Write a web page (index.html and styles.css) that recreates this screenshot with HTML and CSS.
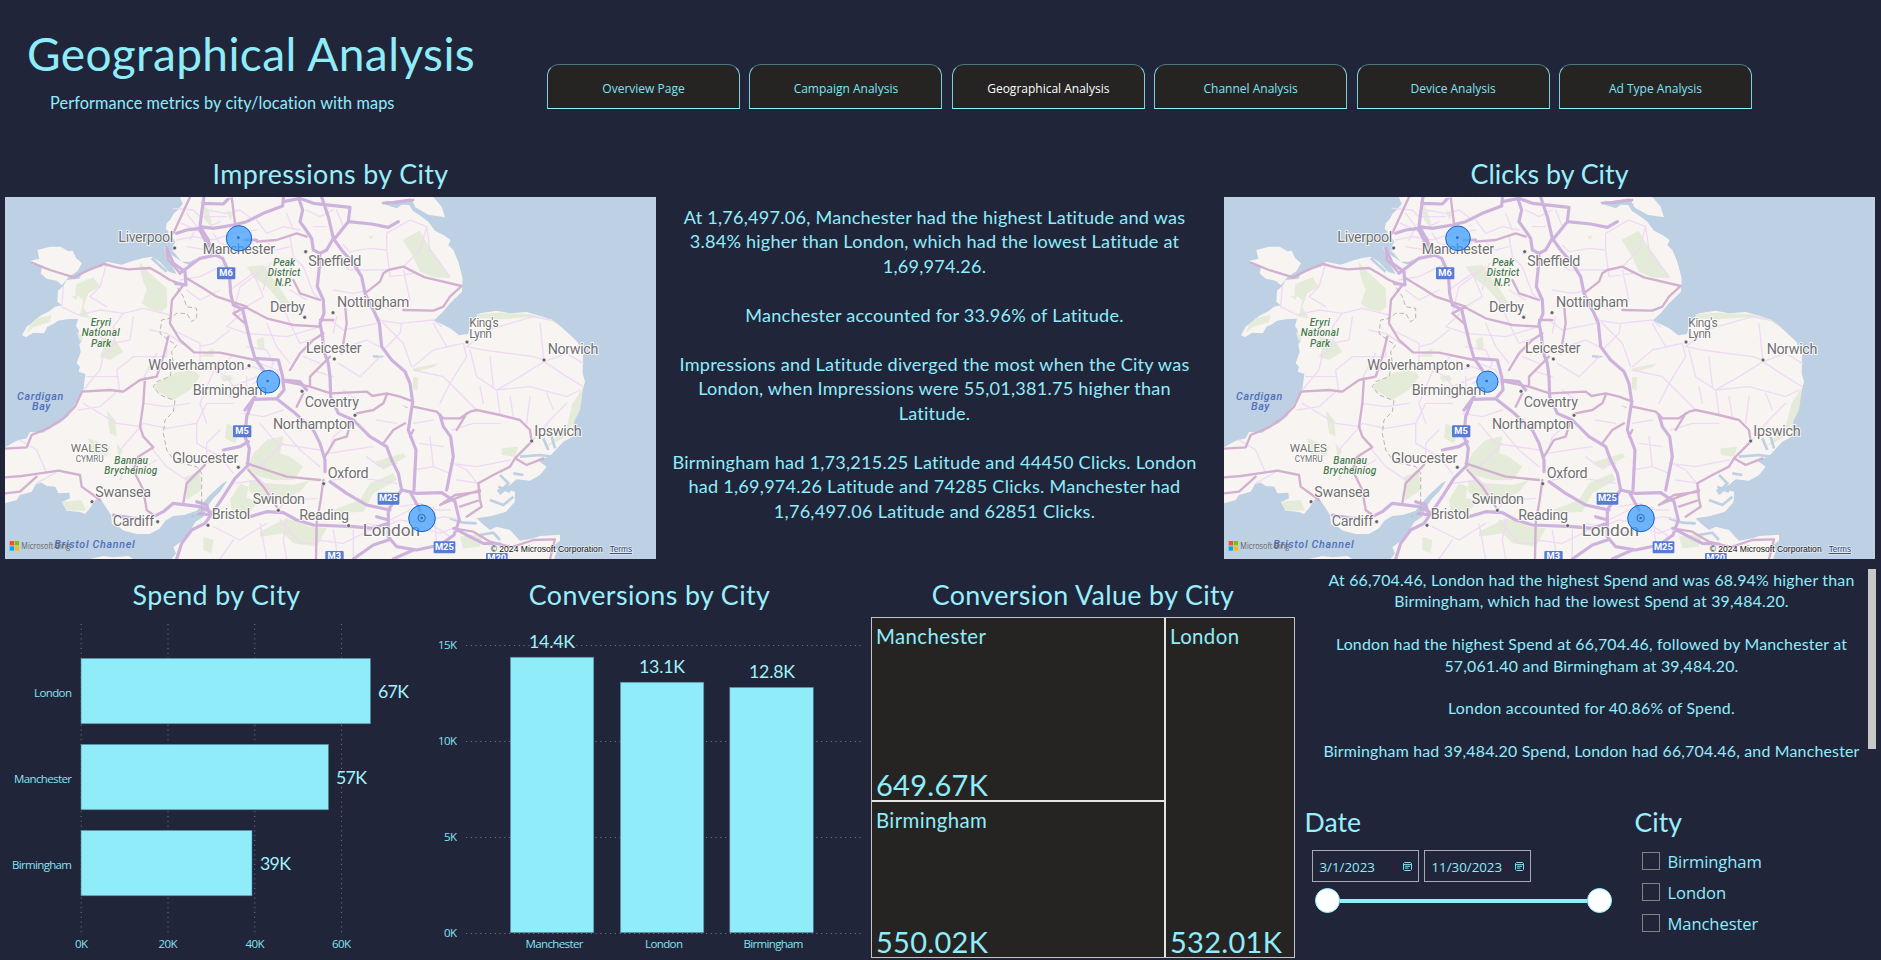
FILE: index.html
```html
<!DOCTYPE html>
<html lang="en">
<head>
<meta charset="utf-8">
<title>Geographical Analysis</title>
<link rel="stylesheet" href="styles.css">
</head>
<body>
<svg class="defs" aria-hidden="true">
<symbol id="england" viewBox="15 21 1953 1086" preserveAspectRatio="none">
  <rect class="sea" x="15" y="21" width="1953" height="1086"/>
  <g class="land">
    <path d="M540 21L548 42 533 60 520 72 512 88 500 100 497 116 506 126 502 137 518 142 526 155 517 172 524 182 505 180 492 170 500 196 512 222 530 252 508 246 480 216 455 200 430 204 400 212 365 224 320 215 305 230 270 238 245 252 238 266 200 270 190 288 174 302 172 336 186 346 165 350 148 364 120 378 100 395 80 410 66 436 78 441 100 428 132 430 142 410 160 402 174 392 200 388 234 386 228 408 236 420 236 438 246 450 238 464 242 486 230 520 240 530 236 545 256 552 250 600 236 622 220 650 205 678 178 700 150 712 130 728 90 726 80 745 50 752 15 772V940L50 930 60 915 95 905 108 882 125 878 140 888 166 890 175 910 208 908 210 925 186 936 200 962 240 966 255 972 272 952 285 930 300 925 318 952 333 975 336 1003 355 1010 372 1022 410 1032 450 1032 480 1015 496 992 520 978 552 975 590 962 608 940 630 915 668 880 682 872 660 905 640 925 622 950 610 980 586 996 570 1022 552 1048 520 1072 528 1090 515 1107H1662L1672 1080 1656 1070 1680 1052 1680 1034 1620 1038 1600 1045 1560 1052 1530 1020 1490 1010 1470 1020 1445 1000 1430 985 1475 978 1518 965 1544 936 1545 905 1520 900 1500 915 1490 900 1530 885 1550 868 1590 872 1620 855 1640 830 1615 812 1650 798 1690 755 1718 740 1722 690 1738 655 1745 610 1755 575 1748 550 1749 490 1732 455 1700 425 1665 395 1630 380 1580 366 1530 370 1490 362 1440 370 1412 398 1404 432 1378 436 1350 415 1320 400 1300 392 1325 370 1350 340 1386 305 1388 265 1375 215 1360 180 1345 165 1352 150 1330 135 1305 122 1285 95 1262 78 1238 62 1228 45 1205 44 1190 55 1160 45 1140 36 1120 42 1160 32 1200 38 1236 30 1246 52 1285 74 1335 82 1325 50 1300 21Z"/>
    <path d="M112 180L150 170 182 170 205 184 218 182 228 204 246 220 232 244 205 262 186 286 170 272 140 266 122 250 126 232 96 222 92 212 118 206Z"/>
    <path d="M270 1107L310 1098 340 1102 385 1098 400 1107Z"/>
  </g>
  <g class="park">
    <path d="M418 215L440 240 470 268 500 295 502 350 485 365 445 355 425 340 440 300 425 260ZM230 282L280 262 300 290 265 310 250 350 270 385 240 380 250 330 225 310ZM110 385L155 375 150 395 100 412 80 430 90 405ZM300 440L345 450 370 485 330 510 300 500 310 475ZM470 580L530 545 590 545 600 560 570 600 520 630 462 598ZM320 660L345 690 350 740 330 730ZM265 745L330 770 320 800 270 790ZM350 760L370 785 355 800ZM760 790L800 750 850 738 840 790 870 800 910 830 880 870 820 870 780 860 740 835ZM690 930L720 880 745 890 740 925 780 930 750 965 710 980 695 960ZM780 1025L860 985 930 1010 980 1015 950 1070 880 1060 850 1030 780 1040ZM1000 960L1080 930 1110 880 1180 850 1190 870 1120 910 1090 965 1010 970ZM555 860L600 845 605 900 560 930ZM1208 150L1258 122 1285 165 1320 215 1352 265 1300 262 1260 245 1240 200ZM1430 372L1500 368 1590 372 1655 388 1690 415 1640 385 1580 382 1500 388 1430 385ZM1750 590L1740 660 1720 700 1690 745 1640 770 1700 710 1718 640ZM1505 775L1555 770 1545 800 1505 795ZM1240 560L1255 562 1252 602 1238 595ZM1240 535L1315 520 1300 532 1245 545ZM740 230L790 225 830 280 870 340 850 345 800 290 760 260ZM770 450L790 440 795 475 775 480ZM595 500L640 475 640 500ZM185 935L245 930 258 962 200 962ZM1125 815L1210 790 1218 800 1150 840ZM1380 1040L1450 1030 1440 1070 1390 1075ZM680 700L720 720 705 760 675 745ZM610 1040L640 1050 635 1090 610 1080Z"/>
    <path d="M230 425L250 440 240 455ZM600 30L625 60 640 120 615 90ZM680 60L700 75 690 90ZM1105 140L1120 135 1115 148ZM215 320L235 312 230 330Z"/>
    <path d="M750 870L800 880 880 885 930 870 900 905 830 935 770 925 745 900ZM545 560L560 530 580 545ZM660 560L690 555 700 570 670 575Z"/>
  </g>
  <g class="water">
    <path d="M500 170L525 190 545 215 570 215 590 205 570 225 550 218 530 205 515 195ZM1120 495L1155 498 1140 505 1118 502ZM1205 645L1225 652 1220 655Z"/>
    <path class="creek" d="M1500 855L1525 880 1510 895M1470 930L1510 945 1540 920M1560 800L1620 795 1655 800M1630 745L1645 780M1655 740L1665 775M1540 850L1570 855M1350 985L1390 998 1430 1000M455 205L500 245M1440 1035L1480 1028 1500 1050M1495 890L1530 905"/>
  </g>
  <g class="road minor">
    <path d="M190 290L185 350 235 375 300 360 370 370 430 355 510 375M320 220L300 290 270 320 320 350M250 600L300 540 310 495 345 460 340 410 370 370M360 610L350 540 400 500 500 500 500 440M430 565L470 490M235 660L300 650 350 605M425 710L350 700 250 640M360 780L430 700 500 715 590 700M455 775L500 830 560 870 610 830M590 700L590 760 660 800 700 850M590 700L620 640 700 640M600 460L600 520 680 560 700 590 770 560M600 460L520 420M700 495L640 545 600 640 620 700M735 360L680 410 740 430 860 440 960 410M690 420L640 460 600 470M660 300L600 330 560 300M690 300L760 250 790 320 740 350M810 220L790 300M870 140L880 200 910 230 940 310 960 330M520 55L580 60 600 80 680 80M530 150L580 140 640 150 700 130 770 120M545 100L600 125 660 95M560 170L620 180 690 180M800 400L830 470 870 520M840 330L870 400 900 460 960 440M990 390L1030 420 1130 400M1015 480L1100 450 1140 470M1130 390L1200 400 1300 390 1325 410M1015 520L1080 560 1140 500M1150 480L1200 430 1205 400M1040 330L1100 340 1150 400 1210 460 1235 530M1300 400L1340 470 1390 460 1400 500 1350 580 1320 640M1240 530L1300 480 1390 460M1240 540L1330 560 1380 610 1430 660M1400 470L1450 480 1600 500 1632 510M1400 470L1460 420 1530 400 1600 380 1650 390M1490 600L1560 560 1632 515 1700 490 1750 520M1410 480L1430 560 1490 600 1500 670M1490 600L1590 590 1700 620 1740 600M1632 515L1700 560 1750 590M1632 515L1620 400M1590 620L1580 700M1595 755L1650 690 1700 640M1355 720L1420 700 1500 700M1350 820L1430 830 1530 810M1440 890L1400 840 1360 820M1240 840L1300 830 1350 850M1300 830L1290 740M1060 690L1000 740 985 790 1050 780 1120 770M1000 870L1060 860 1190 880M850 660L790 680 730 670M780 700L830 760 960 780M850 760L780 830M850 720L900 780 960 830M760 850L850 940 835 960M640 1010L720 1050 800 1000M700 1050L660 1107M780 1000L800 1107M840 990L900 1060 950 1060M950 1050L1030 1060 1110 1020M860 990L850 1050 860 1107M1240 250L1170 260 1160 180 1110 175 1050 185 1030 165M1160 180L1160 130 1230 90 1280 110M1210 230L1260 180 1280 110M1280 110L1290 180 1350 260M1095 320L1170 360 1230 330 1210 240M1000 300L1060 310 1110 300M450 420L500 430 560 470M360 870L380 820 420 800M110 880L180 840M400 850L470 810M60 750L110 780 140 850M540 270L600 260 680 220M700 370L720 290 800 230M860 70L880 120M660 600L700 625 760 600M740 560L740 610M1240 700L1300 690M660 720L620 760 620 820"/>
    <path d="M560 70L590 110 570 150M620 60L680 70 720 60 760 90M640 130L660 160 720 170 760 160M770 90L800 130 850 110 900 120M790 150L830 180 870 170M920 60L960 80 1000 60M940 110L980 110M1010 60L1030 110M1000 200L1050 240 1160 240M870 300L920 330M740 470L800 480 820 520 800 560 760 580M780 520L830 540 850 590M790 610L820 580 870 570M720 540L760 530 810 550M1100 1000L1150 1010 1200 990 1260 1000 1330 980 1380 990M1200 950L1260 940 1310 960 1350 960M1210 1030L1260 1010 1320 1030 1370 1010M1260 960L1240 1030M1300 950L1310 1060M1170 990L1230 960M1290 1000L1350 1040M1000 430L1010 380M960 520L910 500M1000 560L950 545M1030 600L1070 630M1130 690L1190 700M1100 800L1140 830 1190 820M1260 760L1330 770M1370 870L1440 880M1060 1020L1060 1107M1000 1020L1010 1080M1440 590L1450 640M1530 620L1540 680M1640 610L1660 660M1470 500L1480 590M900 720L920 690M700 880L780 870M880 930L950 925M430 640L500 650 570 640M260 560L350 560M400 380L390 450 340 460"/>
  </g>
  <g class="road aroad">
    <path d="M95 218L150 240 222 262 262 242 312 222 350 232 385 238 450 234 478 250 510 270 550 285M550 285L516 330 510 400 540 450 582 487 660 488 765 510M735 350L800 385 880 405 962 410M735 400L700 370 740 350 650 320 610 295 560 265M15 776L80 772 95 735 150 712 190 685 225 650 246 605 330 600 370 605 420 570 470 560 490 500 505 440M435 565L430 640 420 710 430 740 460 772 415 800M415 800L400 840 430 900 440 960 460 975M15 862L65 858 120 850 175 842 240 855 245 890 280 915 300 930M15 910L60 905 110 860M550 940L560 880 600 840 615 825M610 830L560 880M740 820L800 840 860 860 960 870M745 840L790 890 830 950M975 800L1005 750 1040 740 1052 700M970 870L962 930 950 1000 948 1107M855 575L930 590 992 610 1100 605 1118 618 1160 610 1200 620 1240 635M1240 650L1310 665 1330 685 1380 685 1410 665 1430 660 1500 675 1560 690 1590 720 1595 755 1545 805 1530 830 1480 855 1435 880 1440 930 1380 950M1095 310L1140 275 1150 250 1165 240 1210 230 1250 250 1275 262 1385 288 1350 320 1330 350 1300 362 1210 360M1070 670L1120 660 1150 640 1160 615M1035 340L1040 400 1025 490M970 430L940 450 900 490 870 540M930 590L930 560 990 500M890 650L910 610M1215 700L1180 720 1150 760M770 155L830 150 890 130 920 140M695 21L705 100M960 330L900 310 880 270M960 390L1000 390M1320 945L1380 920 1440 900M1440 930L1445 950 1400 980M1320 945L1365 915 1440 905M1360 1015L1420 1025 1470 1055 1530 1070M1540 1070L1600 1050 1665 1048 1650 1107M1370 720L1400 670M1545 805L1580 825 1630 805M1230 740L1240 720M500 180L505 210 540 250M570 21L520 130M1150 40L1240 30"/>
  </g>
  <g class="road motor">
    <path d="M612 21L606 60 600 110 625 150 635 190 668 205 688 250 692 310 700 345 728 358 740 410 752 460 765 505 790 540M610 40L670 42 690 21M765 505L835 510 848 560 852 600 830 626 760 628 740 680 735 740 748 775 742 828 705 865 670 920 640 965 615 1000 575 1020 545 1060 530 1107M850 570L900 575 920 600M530 130L560 120 600 115M600 110L640 115 700 105 740 95 790 70 848 48 850 25M850 35L900 25 940 40 1050 52 1045 95 1005 145M1045 95L1115 102 1165 112 1195 95M895 21L908 60 900 95 918 120 935 145 940 180 960 190 958 230 952 290 970 330 972 370 960 400 968 440 970 480 985 520 990 560 992 620 1015 670 1060 690 1110 740 1160 770 1175 810 1195 850 1205 900M965 21L985 80 1000 145 980 180 960 190M1000 145L1025 180 1060 220 1085 260 1095 310 1125 370 1138 400 1145 470 1175 510 1215 545 1230 580 1238 635 1225 720 1248 780 1242 900M1320 675L1330 710 1352 740 1360 800 1340 900M1205 900L1250 910 1325 908 1365 935 1378 990 1362 1035 1320 1065 1250 1080 1190 1070 1165 1040 1165 960 1205 900M830 626L880 665 940 720 960 760 975 810 975 845M990 875L1040 910 1100 945 1170 960M340 975L400 985 450 985 490 965 520 940 600 950 630 965M750 980L800 965 850 968 890 990 940 1005 1060 1010 1120 1015 1165 1000M590 935L620 945 630 975 600 970M1165 1050L1120 1065 1060 1107M1362 1015L1420 1045 1450 1060 1500 1062M540 250L560 235 600 205 650 195M500 175L520 220 555 245 558 285 530 280M765 620L735 660M735 150L770 150M640 185L620 160 600 120M670 780L720 770 745 755M1230 905L1260 960M1240 1080L1180 1107M1130 980L1165 990M1230 30L1180 38"/>
  </g>
  <path class="border" d="M520 275L550 320 560 350 590 355 590 385 575 395 560 370 530 370 510 385 485 390 480 430 505 450 530 465 515 485 520 520 510 560 470 575 460 590 480 615 525 632 520 665 495 690 490 730 500 780 525 815 590 830 605 850 605 970 575 980"/>
  <g class="city-text">
    <text x="674" y="22" textLength="156">Bradford</text>
    <text x="355" y="156" textLength="165">Liverpool</text><text x="608" y="193" textLength="217">Manchester</text><text x="925" y="227" textLength="159">Sheffield</text><text x="810" y="367" textLength="105">Derby</text><text x="1011" y="350" textLength="217">Nottingham</text><text x="918" y="490" textLength="167">Leicester</text><text x="445" y="541" textLength="288">Wolverhampton</text><text x="578" y="615" textLength="223">Birmingham</text><text x="914" y="650" textLength="163">Coventry</text><text x="819" y="718" textLength="245">Northampton</text><text x="517" y="818" textLength="198">Gloucester</text><text x="286" y="921" textLength="167">Swansea</text><text x="338" y="1008" textLength="125">Cardiff</text><text x="635" y="988" textLength="116">Bristol</text><text x="758" y="941" textLength="157">Swindon</text><text x="898" y="989" textLength="149">Reading</text><text x="983" y="863" textLength="123">Oxford</text><text x="1643" y="493" textLength="152">Norwich</text><text x="1603" y="738" textLength="142">Ipswich</text>
    <text class="capital" x="1088" y="1038" textLength="172">London</text>
    <text class="small" x="1408" y="410" textLength="88">King's</text><text class="small" x="1408" y="444" textLength="68">Lynn</text>
    <text class="country" x="212" y="787" textLength="112">WALES</text><text class="country-sub" x="227" y="816" textLength="84">CYMRU</text>
  </g>
  <g class="park-text">
    <text x="272" y="408" textLength="61">Eryri</text><text x="245" y="439" textLength="114">National</text><text x="273" y="470" textLength="60">Park</text>
    <text x="820" y="228" textLength="65">Peak</text><text x="803" y="259" textLength="98">District</text><text x="825" y="288" textLength="50">N.P.</text>
    <text x="343" y="821" textLength="101">Bannau</text><text x="313" y="852" textLength="159">Brycheiniog</text>
  </g>
  <g class="sea-text">
    <text x="51" y="630" textLength="139">Cardigan</text><text x="96" y="661" textLength="55">Bay</text><text x="163" y="1075" textLength="241">Bristol Channel</text>
  </g>
  <g class="dot">
    <circle cx="524" cy="174" r="6"/><circle cx="917" cy="185" r="6"/><circle cx="914" cy="382" r="6"/><circle cx="999" cy="368" r="6"/><circle cx="1003" cy="507" r="6"/><circle cx="747" cy="527" r="6"/><circle cx="906" cy="604" r="6"/><circle cx="1065" cy="676" r="6"/><circle cx="715" cy="832" r="6"/><circle cx="276" cy="935" r="6"/><circle cx="473" cy="995" r="6"/><circle cx="624" cy="1006" r="6"/><circle cx="835" cy="961" r="6"/><circle cx="1046" cy="1007" r="6"/><circle cx="971" cy="881" r="6"/><circle cx="1401" cy="456" r="6"/><circle cx="1632" cy="510" r="6"/><circle cx="1595" cy="753" r="6"/>
  </g>
  <g class="shield">
    <rect x="651" y="232" width="55" height="36" rx="3"/><text x="678" y="257">M6</text>
    <rect x="699" y="706" width="55" height="36" rx="3"/><text x="726" y="731">M5</text>
    <rect x="1133" y="908" width="65" height="36" rx="3"/><text x="1165" y="933">M25</text>
    <rect x="1301" y="1054" width="65" height="36" rx="3"/><text x="1333" y="1079">M25</text>
    <rect x="976" y="1083" width="55" height="36" rx="3"/><text x="1003" y="1107">M3</text>
    <rect x="1458" y="1089" width="65" height="36" rx="3"/><text x="1490" y="1112">M20</text>
  </g>
  <g class="brand">
    <path fill="#f35325" d="M29 1053h13v13h-13z"/><path fill="#81bc06" d="M44 1053h13v13h-13z"/><path fill="#05a6f0" d="M29 1069h13v13h-13z"/><path fill="#ffba08" d="M44 1069h13v13h-13z"/>
    <text x="64" y="1077" textLength="147" lengthAdjust="spacingAndGlyphs">Microsoft Bing</text>
  </g>
  <g class="legal"><text x="1472" y="1086" textLength="336" lengthAdjust="spacingAndGlyphs">© 2024 Microsoft Corporation</text><text class="terms" x="1829" y="1086" textLength="67" lengthAdjust="spacingAndGlyphs">Terms</text></g>
</symbol>
<symbol id="calendar" viewBox="0 0 9 9"><path d="M1.5.5h6l1 1v6l-1 1h-6l-1-1v-6zM.5 2.6h8M2 4.3h5M2 6.1h3.5" fill="none" stroke="#7fdfee"/></symbol>
</svg>

<header class="top">
  <div class="heading">
    <h1>Geographical Analysis</h1>
    <p class="tagline">Performance metrics by city/location with maps</p>
  </div>
  <nav class="tabs">
    <a class="tab">Overview Page</a>
    <a class="tab">Campaign Analysis</a>
    <a class="tab active">Geographical Analysis</a>
    <a class="tab">Channel Analysis</a>
    <a class="tab">Device Analysis</a>
    <a class="tab">Ad Type Analysis</a>
  </nav>
</header>

<main>
  <section class="row maps">
    <article class="map-card">
      <h2>Impressions by City</h2>
      <svg class="map" viewBox="15 21 1953 1086" preserveAspectRatio="none">
        <use href="#england" x="15" y="21" width="1953" height="1086"/>
        <g class="bubble"><circle cx="717" cy="145" r="38"/><circle cx="805" cy="575" r="34"/><circle cx="1266" cy="985" r="40"/></g>
        <g class="pin"><circle cx="715" cy="143" r="4"/><circle cx="803" cy="573" r="4"/><circle cx="1265" cy="984" r="4"/><circle class="ring" cx="1265" cy="984" r="11"/></g>
      </svg>
    </article>
    <div class="narrative wide">
      <p>At 1,76,497.06, Manchester had the highest Latitude and was<br>3.84% higher than London, which had the lowest Latitude at<br>1,69,974.26.</p>
      <p>Manchester accounted for 33.96% of Latitude.</p>
      <p>Impressions and Latitude diverged the most when the City was<br>London, when Impressions were 55,01,381.75 higher than<br>Latitude.</p>
      <p>Birmingham had 1,73,215.25 Latitude and 44450 Clicks. London<br>had 1,69,974.26 Latitude and 74285 Clicks. Manchester had<br>1,76,497.06 Latitude and 62851 Clicks.</p>
    </div>
    <article class="map-card">
      <h2 class="tight">Clicks by City</h2>
      <svg class="map" viewBox="15 21 1953 1086" preserveAspectRatio="none">
        <use href="#england" x="15" y="21" width="1953" height="1086"/>
        <g class="bubble"><circle cx="717" cy="145" r="37"/><circle cx="805" cy="575" r="32"/><circle cx="1266" cy="985" r="40"/></g>
        <g class="pin"><circle cx="715" cy="143" r="4"/><circle cx="803" cy="573" r="4"/><circle cx="1265" cy="984" r="4"/><circle class="ring" cx="1265" cy="984" r="11"/></g>
      </svg>
    </article>
  </section>

  <section class="row charts">
    <article class="spend">
      <h2>Spend by City</h2>
      <svg class="chart" width="430" height="348" viewBox="0 612 430 348">
        <path class="grid" d="M81.2 625V936M168 625V936M254.8 625V936M341.5 625V936"/>
        <g class="bars"><rect x="81" y="659.3" width="289.5" height="65.5"/><rect x="81" y="745.3" width="247.5" height="65.5"/><rect x="81" y="831.3" width="171" height="65.5"/></g>
        <g class="axis end"><text x="72" y="698" textLength="38">London</text><text x="72" y="784" textLength="58">Manchester</text><text x="72" y="870" textLength="60">Birmingham</text></g>
        <g class="axis mid"><text x="81.5" y="949" textLength="13">0K</text><text x="168" y="949" textLength="19">20K</text><text x="255" y="949" textLength="19">40K</text><text x="341.5" y="949" textLength="19">60K</text></g>
        <g class="value"><text x="378" y="699" textLength="31">67K</text><text x="336" y="785" textLength="31">57K</text><text x="260" y="871" textLength="31">39K</text></g>
      </svg>
    </article>
    <article class="conversions">
      <h2>Conversions by City</h2>
      <svg class="chart" width="440" height="348" viewBox="430 612 440 348">
        <path class="grid" d="M466 646.5H862M466 742.5H862M466 838.5H862M466 934.5H862"/>
        <g class="bars"><rect x="510.3" y="658.2" width="83.5" height="275.5"/><rect x="620.3" y="683.2" width="83.5" height="250.5"/><rect x="729.8" y="688.3" width="83.5" height="245.4"/></g>
        <g class="axis end"><text x="457" y="650" textLength="19">15K</text><text x="457" y="746" textLength="19">10K</text><text x="457" y="842" textLength="13">5K</text><text x="457" y="938" textLength="13">0K</text></g>
        <g class="axis mid"><text x="554.5" y="949" textLength="58">Manchester</text><text x="664" y="949" textLength="38">London</text><text x="773.5" y="949" textLength="60">Birmingham</text></g>
        <g class="value mid"><text x="552" y="649" textLength="46">14.4K</text><text x="662" y="674" textLength="46">13.1K</text><text x="772" y="679" textLength="46">12.8K</text></g>
      </svg>
    </article>
    <article class="conversion-value">
      <h2>Conversion Value by City</h2>
      <div class="treemap">
        <div class="cell manchester"><span>Manchester</span><strong>649.67K</strong></div>
        <div class="cell birmingham"><span>Birmingham</span><strong>550.02K</strong></div>
        <div class="cell london"><span>London</span><strong>532.01K</strong></div>
      </div>
    </article>
    <aside class="side">
      <div class="scroller">
        <div class="narrative compact">
          <p>At 66,704.46, London had the highest Spend and was 68.94% higher than<br>Birmingham, which had the lowest Spend at 39,484.20.</p>
          <p>London had the highest Spend at 66,704.46, followed by Manchester at<br>57,061.40 and Birmingham at 39,484.20.</p>
          <p>London accounted for 40.86% of Spend.</p>
          <p>Birmingham had 39,484.20 Spend, London had 66,704.46, and Manchester</p>
        </div>
        <div class="scrollbar"></div>
      </div>
      <div class="filters">
        <div class="date">
          <h3>Date</h3>
          <div class="inputs">
            <div class="input"><span>3/1/2023</span><svg width="9" height="9"><use href="#calendar"/></svg></div>
            <div class="input"><span>11/30/2023</span><svg width="9" height="9"><use href="#calendar"/></svg></div>
          </div>
          <div class="slider"><i class="knob"></i><i class="track"></i><i class="knob"></i></div>
        </div>
        <div class="city">
          <h3>City</h3>
          <div class="option"><i class="box"></i><span>Birmingham</span></div>
          <div class="option"><i class="box"></i><span>London</span></div>
          <div class="option"><i class="box"></i><span>Manchester</span></div>
        </div>
      </div>
    </aside>
  </section>
</main>
</body>
</html>
```
FILE: styles.css
```css
* { box-sizing: border-box; }
html, body { margin: 0; background: #20253a; }
html { height: 960px; overflow: hidden; }
body {
  width: 1881px; height: 960px; overflow: hidden;
  display: flex; flex-direction: column;
  color: #91ecfa; font-family: Lato, "Liberation Sans", sans-serif;
}
h1, h2, h3, p { margin: 0; font-weight: 400; }
.defs { position: absolute; width: 0; height: 0; }

.top { height: 158px; display: flex; }
.heading { width: 547px; padding-top: 27px; }
h1 { padding-left: 27px; font-size: 46px; line-height: 54px; letter-spacing: .4px; white-space: nowrap; }
.tagline { padding: 11.5px 0 0 50px; font-size: 16.3px; line-height: 20px; letter-spacing: .1px; }
.tabs { display: flex; gap: 9.4px; padding-top: 64px; }
.tab {
  width: 193px; height: 45px; padding-top: 3px; display: flex; align-items: center; justify-content: center;
  background: #252423; border: 1px solid #7fcfdc; border-top-color: #4d777e; border-bottom-color: #92eefb;
  border-radius: 12px 12px 0 0; font: 12px "Open Sans", sans-serif; color: #7fe3f3;
}
.tab.active { color: #fff; }

h2 { font-size: 26.8px; line-height: 32px; letter-spacing: .4px; text-align: center; white-space: nowrap; color: #9beffa; }
.tight { letter-spacing: 0; }
.row { display: flex; }
.maps { height: 404px; padding-left: 5px; }
.map-card { width: 651px; }
.map-card h2 { height: 39px; }
.map { display: block; width: 651px; height: 362px; }
.narrative { text-align: center; white-space: nowrap; }
.wide { width: 568px; padding: 46.5px 11px 0 0; font-size: 18.1px; line-height: 24.5px; letter-spacing: .23px; }
.wide p { margin-bottom: 24.5px; }

.sea { fill: #bdd0e4; }
.land { fill: #f8f4f2; }
.park { fill: #e4ebd8; }
.water { fill: #bdd0e4; }
.creek { fill: none; stroke: #bdd0e4; stroke-width: 8; }
.road { fill: none; stroke-linejoin: round; stroke-linecap: round; }
.minor { stroke: #eedaf5; stroke-width: 4; }
.aroad { stroke: #d1b0d0; stroke-width: 7; }
.motor { stroke: #ccb2dd; stroke-width: 9.5; }
.border { fill: none; stroke: #b9b5b5; stroke-width: 3; stroke-dasharray: 14 8; }
.city-text { font: 43px Roboto, sans-serif; fill: #707070; stroke: #fff; stroke-width: 6; stroke-opacity: .8; paint-order: stroke; }
.city-text .capital { font-size: 52px; }
.city-text .small { font-size: 36px; }
.city-text .country { font-size: 35px; }
.city-text .country-sub { font-size: 25px; }
.park-text, .sea-text { font: italic 500 30px Roboto, sans-serif; fill: #4a7a50; stroke: #fff; stroke-width: 4; stroke-opacity: .6; paint-order: stroke; }
.sea-text { font-size: 32px; fill: #4f6fbb; stroke: none; }
.dot { fill: #666; stroke: #fff; stroke-width: 2; }
.shield { fill: #587bd6; font: 700 28px Roboto, sans-serif; text-anchor: middle; }
.shield text { fill: #fff; }
.brand text { font: 25px "Open Sans", sans-serif; fill: #666; }
.legal text { font: 28px "Liberation Sans", sans-serif; fill: #111; stroke: #fff; stroke-width: 4; stroke-opacity: .6; paint-order: stroke; }
.legal .terms { fill: #35457e; text-decoration: underline; }
.bubble { fill: #369cff; fill-opacity: .72; stroke: #1463c8; stroke-width: 3; }
.pin { fill: #2a6db0; }
.ring { fill: none; stroke: #3a6aa6; stroke-width: 3; }

.charts { height: 398px; padding-top: 17px; }
.charts h2 { height: 32px; }
.spend { width: 430px; }
.spend h2 { width: 433px; }
.conversions { width: 441px; }
.conversions h2 { width: 439px; }
.chart { display: block; }
.grid { fill: none; stroke: #777c88; stroke-width: 1; stroke-dasharray: 1 3.8; }
.bars { fill: #91ecfa; stroke: #4d7f92; stroke-width: .6; }
.axis { font: 11.5px "Open Sans", sans-serif; fill: #86e3f2; }
.value { font: 17.8px Lato, sans-serif; fill: #a0f2fb; }
.spend .chart, .conversions .chart { margin-top: -.5px; }
.end { text-anchor: end; }
.mid { text-anchor: middle; }

.conversion-value { width: 424px; }
.treemap {
  margin-top: 6px; width: 424px; height: 341px; display: grid;
  grid-template: 182px 155px / 292px 128px; gap: 2px;
  background: #e4e4e4; border: 1px solid #c4c4c4;
}
.cell { background: #252423; padding: 5px 4px 0; display: flex; flex-direction: column; justify-content: space-between; align-items: flex-start; font-size: 20.4px; line-height: 26px; letter-spacing: .4px; }
.cell strong { font-weight: 400; font-size: 29px; line-height: 31px; letter-spacing: .3px; }
.london { grid-column: 2; grid-row: 1 / 3; }

.side { width: 586px; margin-top: -17px; }
.scroller { height: 244px; padding-top: 7px; display: flex; }
.compact { width: 573px; padding: 0 0 0 20px; font-size: 15.9px; line-height: 21.4px; letter-spacing: .2px; }
.compact p { margin-bottom: 21.4px; }
.scrollbar { width: 8px; height: 180px; background: #c8c8c8; }
.filters { display: flex; padding-left: 9.5px; }
.filters h3 { font-size: 26.6px; line-height: 32px; color: #9beffa; }
.date { width: 330px; }
.inputs { display: flex; gap: 5px; padding: 12px 0 0 7px; }
.input { width: 107px; height: 32px; border: 1px solid #a9abb2; padding: 1px 6px 0 7px; display: flex; align-items: center; justify-content: space-between; font: 13.3px "Open Sans", sans-serif; }
.slider { display: flex; align-items: center; padding: 6px 0 0 10px; }
.knob { width: 25px; height: 25px; border-radius: 50%; background: #fff; border: 1px solid #92eefb; }
.track { width: 247px; height: 4px; background: #92eefb; }
.city h3 { margin-bottom: 7px; }
.option { display: flex; align-items: center; gap: 8px; height: 31px; padding-left: 7px; font: 16.6px/24px "Open Sans", sans-serif; letter-spacing: -.1px; }
.option span { padding-top: 2px; }
.box { width: 18px; height: 18px; border: 1px solid #85827f; }
```
